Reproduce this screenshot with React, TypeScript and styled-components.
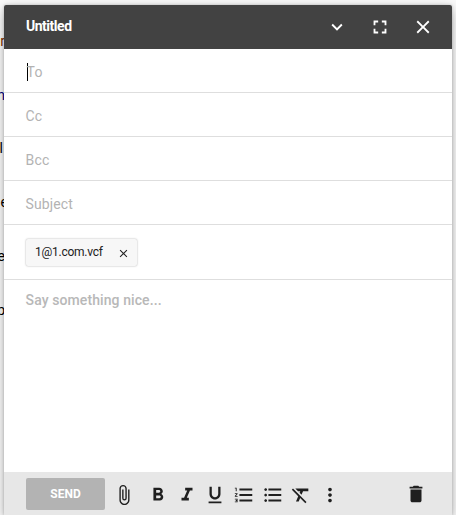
import React from "react";
import styled, { createGlobalStyle } from "styled-components";
import {
  MdExpandMore, MdFullscreen, MdClose, MdAttachFile, MdFormatBold, MdFormatItalic,
  MdFormatUnderlined, MdFormatListNumbered, MdFormatListBulleted, MdFormatClear,
  MdMoreVert, MdDelete,
} from "react-icons/md";

const GlobalStyle = createGlobalStyle`
  * { box-sizing: border-box; }
  body { margin: 0; background: #fafafa; overflow: hidden; font-family: Roboto, "Liberation Sans", sans-serif; }
`;

const Page = styled.div`
  position: relative;
  height: 515px;
  padding: 5px 4px 0;
  overflow: hidden;
`;

const PageLetter = styled.span<{ $top: number; $right: number; $color?: string }>`
  position: absolute;
  top: ${(p) => p.$top}px;
  right: calc(100% - ${(p) => p.$right}px);
  font-size: 14px;
  line-height: 20px;
  color: ${(p) => p.$color ?? "#000"};
`;

const Dialog = styled.section`
  position: relative;
  display: flex;
  flex-direction: column;
  height: 510px;
  background: #fff;
  border-radius: 2px 2px 0 0;
  overflow: hidden;
`;

const Shadow = styled.div`
  position: relative;
  border-radius: 2px 2px 0 0;
  box-shadow: 0 0 3px rgba(0, 0, 0, 0.22), 0 4px 14px rgba(0, 0, 0, 0.28);
`;

const Header = styled.header`
  display: flex;
  align-items: center;
  flex: none;
  height: 44px;
  padding: 0 18px 1px 22px;
  background: #424242;
  color: #fff;
`;

const Title = styled.h1`
  flex: 1;
  margin: 0;
  padding-bottom: 1px;
  font-size: 14px;
  line-height: 20px;
  font-weight: 700;
  letter-spacing: -0.48px;
`;

const WindowActions = styled.div`
  display: flex;
  gap: 21px;
`;

const IconButton = styled.button<{ $size?: number }>`
  display: flex;
  flex: none;
  padding: 0;
  border: 0;
  background: none;
  color: inherit;
  svg { width: ${(p) => p.$size ?? 22}px; height: ${(p) => p.$size ?? 22}px; }
`;

const Field = styled.div`
  display: flex;
  align-items: center;
  flex: none;
  height: 44px;
  padding: 3px 21.6px 0;
  border-bottom: 1px solid #dedede;
  color: #b3b3b3;
  font-size: 14px;
  line-height: 20px;
  letter-spacing: 0.12px;
`;

const Caret = styled.i`
  width: 1px;
  height: 18px;
  margin: 0 -1px 0 1px;
  background: #000;
`;

const Attachments = styled.div`
  display: flex;
  align-items: center;
  flex: none;
  height: 55px;
  padding: 1px 22px 0;
  border-bottom: 1px solid #dedede;
`;

const Chip = styled.div`
  display: flex;
  align-items: center;
  justify-content: space-between;
  width: 111px;
  height: 27px;
  padding: 0 7.5px 1px 9px;
  border-radius: 2px;
  background: #f7f7f7;
  box-shadow: 0 0 2px rgba(0, 0, 0, 0.35);
  color: #212121;
  font-size: 12px;
  letter-spacing: -0.25px;
  ${IconButton} { padding-top: 2px; }
`;

const Message = styled.div`
  flex: 1;
  padding: 10px 21.6px;
  color: #b8b8b8;
  font-size: 14px;
  font-weight: 500;
  line-height: 20px;
  letter-spacing: 0.09px;
`;

const Footer = styled.footer`
  display: flex;
  align-items: center;
  flex: none;
  height: 43px;
  padding: 1px 24.6px 0 22px;
  background: #e7e7e7;
  color: #1f1f1f;
`;

const SendButton = styled.button`
  width: 79px;
  height: 32px;
  padding: 0;
  border: 0;
  border-radius: 2px;
  background: #b3b3b3;
  color: #fff;
  font: 700 12px Roboto, sans-serif;
`;

const Formatting = styled.div`
  display: flex;
  flex: 1;
  gap: 6.7px;
  margin-left: 8.3px;
  padding-top: 1px;
  > :first-child { margin-right: 5px; }
`;

const tools = [MdAttachFile, MdFormatBold, MdFormatItalic, MdFormatUnderlined,
  MdFormatListNumbered, MdFormatListBulleted, MdFormatClear, MdMoreVert];

export default function App() {
  return (
    <Page>
      <GlobalStyle />
      <PageLetter $top={31} $right={5} $color="#7a3000">r</PageLetter>
      <PageLetter $top={85} $right={5} $color="#000080">n</PageLetter>
      <PageLetter $top={138} $right={3}>l</PageLetter>
      <PageLetter $top={192} $right={8}>e</PageLetter>
      <PageLetter $top={246} $right={5}>e</PageLetter>
      <PageLetter $top={300} $right={5}>p</PageLetter>
      <Shadow>
        <Dialog>
          <Header>
            <Title>Untitled</Title>
            <WindowActions>
              <IconButton><MdExpandMore /></IconButton>
              <IconButton><MdFullscreen /></IconButton>
              <IconButton><MdClose /></IconButton>
            </WindowActions>
          </Header>
          <Field><Caret />To</Field>
          <Field>Cc</Field>
          <Field>Bcc</Field>
          <Field>Subject</Field>
          <Attachments>
            <Chip>1@1.com.vcf<IconButton $size={13}><MdClose /></IconButton></Chip>
          </Attachments>
          <Message>Say something nice...</Message>
          <Footer>
            <SendButton>SEND</SendButton>
            <Formatting>
              {tools.map((Icon, i) => <IconButton key={i}><Icon /></IconButton>)}
            </Formatting>
            <IconButton><MdDelete /></IconButton>
          </Footer>
        </Dialog>
      </Shadow>
    </Page>
  );
}
